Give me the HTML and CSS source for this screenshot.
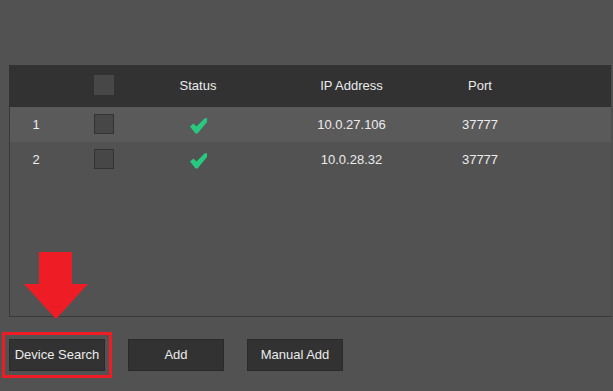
FILE: index.html
```html
<html>
<head>
<title>Device Manager</title>
<link rel="stylesheet" href="styles.css">
</head>
<body>

<div class="page">

<div class="panel">
	<div class="row head">
		<div class="cell"></div>
		<div class="cell"><span class="box boxHead"></span></div>
		<div class="cell">Status</div>
		<div class="cell">IP Address</div>
		<div class="cell">Port</div>
		<div class="cell"></div>
	</div>
	<div class="row odd">
		<div class="cell">1</div>
		<div class="cell"><span class="box"></span></div>
		<div class="cell"><svg class="tick" width="17" height="16" viewBox="0 0 17 16"><polygon points="0,8.5 3.5,5.5 6.5,8.5 14.5,0.5 17,0 17,4 7.5,15.5 5.5,15.5"/></svg></div>
		<div class="cell">10.0.27.106</div>
		<div class="cell">37777</div>
		<div class="cell"></div>
	</div>
	<div class="row">
		<div class="cell">2</div>
		<div class="cell"><span class="box"></span></div>
		<div class="cell"><svg class="tick" width="17" height="16" viewBox="0 0 17 16"><polygon points="0,8.5 3.5,5.5 6.5,8.5 14.5,0.5 17,0 17,4 7.5,15.5 5.5,15.5"/></svg></div>
		<div class="cell">10.0.28.32</div>
		<div class="cell">37777</div>
		<div class="cell"></div>
	</div>
</div>

<div class="buttons">
	<button class="btn marked">Device Search</button>
	<button class="btn">Add</button>
	<button class="btn">Manual Add</button>
</div>

<svg class="arrow" width="66" height="68" viewBox="0 0 66 68">
	<polygon points="15,0 48,0 48,32 64,32 32,67 0,32 15,32"/>
</svg>

</div>

</body>
</html>
```

FILE: styles.css
```css
body{
	margin: 0;
	background: #525252;
	font: 13px "Liberation Sans", Arial, sans-serif;
	color: #ececec;
	overflow: hidden;
}
.page{
	position: relative;
	width: 613px;
	height: 391px;
	padding: 65px 0 0 9px;
	box-sizing: border-box;
}
.panel{
	width: 603px;
	height: 252px;
	box-sizing: border-box;
	border-left: 1px solid #393939;
	border-bottom: 1px solid #393939;
	border-right: 1px solid #4c4c4c;
}
.row{
	display: grid;
	grid-template-columns: 52px 84px 104px 203px 54px 1fr;
	height: 35px;
	align-items: center;
	line-height: 15px;
	padding-bottom: 1px;
	box-sizing: border-box;
}
.row.head{
	height: 42px;
	background: #323232;
	margin-left: -1px;
	padding-left: 1px;
	padding-bottom: 2px;
}
.row.odd{
	background: #5a5a5a;
}
.cell{
	text-align: center;
	display: flex;
	justify-content: center;
	align-items: center;
}
.box{
	display: block;
	width: 18px;
	height: 18px;
	background: #474747;
	border: 1px solid #333333;
}
.box.boxHead{
	border-color: #474747;
}
.tick{
	display: block;
	fill: #27c97f;
	margin-top: 3px;
}
.buttons{
	display: flex;
	gap: 23px;
	margin-top: 22px;
}
.btn{
	width: 96px;
	height: 32px;
	background: #323232;
	border: 1px solid #2a2a2a;
	color: #ececec;
	font: 13px "Liberation Sans", Arial, sans-serif;
	padding: 0 0 2px 0;
}
.btn.marked{
	outline: 3px solid #ee1c25;
	outline-offset: 4px;
}
.arrow{
	position: absolute;
	left: 24px;
	top: 252px;
	fill: #ee1c25;
}
```
